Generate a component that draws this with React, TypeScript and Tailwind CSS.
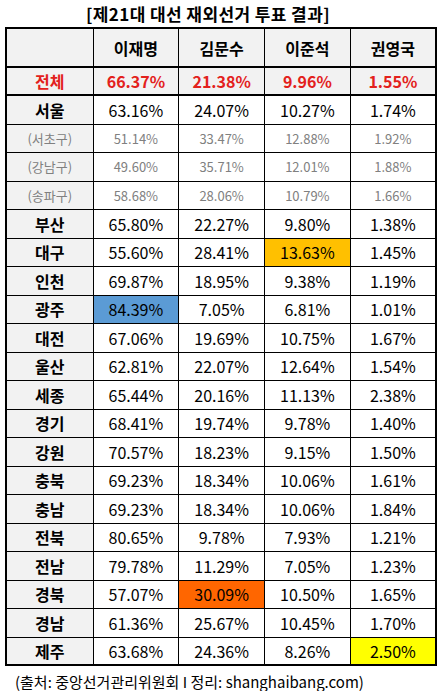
const font = { fontFamily: '"Noto Sans CJK KR", "Noto Sans", sans-serif' };

type Row = {
  name: string;
  values: string[];
  kind?: "total" | "sub";
  hl?: { col: number; bg: string };
};

const candidates = ["이재명", "김문수", "이준석", "권영국"];

const rows: Row[] = [
  { name: "전체", values: ["66.37%", "21.38%", "9.96%", "1.55%"], kind: "total" },
  { name: "서울", values: ["63.16%", "24.07%", "10.27%", "1.74%"] },
  { name: "(서초구)", values: ["51.14%", "33.47%", "12.88%", "1.92%"], kind: "sub" },
  { name: "(강남구)", values: ["49.60%", "35.71%", "12.01%", "1.88%"], kind: "sub" },
  { name: "(송파구)", values: ["58.68%", "28.06%", "10.79%", "1.66%"], kind: "sub" },
  { name: "부산", values: ["65.80%", "22.27%", "9.80%", "1.38%"] },
  { name: "대구", values: ["55.60%", "28.41%", "13.63%", "1.45%"], hl: { col: 2, bg: "bg-[#ffc000]" } },
  { name: "인천", values: ["69.87%", "18.95%", "9.38%", "1.19%"] },
  { name: "광주", values: ["84.39%", "7.05%", "6.81%", "1.01%"], hl: { col: 0, bg: "bg-[#5b9bd5]" } },
  { name: "대전", values: ["67.06%", "19.69%", "10.75%", "1.67%"] },
  { name: "울산", values: ["62.81%", "22.07%", "12.64%", "1.54%"] },
  { name: "세종", values: ["65.44%", "20.16%", "11.13%", "2.38%"] },
  { name: "경기", values: ["68.41%", "19.74%", "9.78%", "1.40%"] },
  { name: "강원", values: ["70.57%", "18.23%", "9.15%", "1.50%"] },
  { name: "충북", values: ["69.23%", "18.34%", "10.06%", "1.61%"] },
  { name: "충남", values: ["69.23%", "18.34%", "10.06%", "1.84%"] },
  { name: "전북", values: ["80.65%", "9.78%", "7.93%", "1.21%"] },
  { name: "전남", values: ["79.78%", "11.29%", "7.05%", "1.23%"] },
  { name: "경북", values: ["57.07%", "30.09%", "10.50%", "1.65%"], hl: { col: 1, bg: "bg-[#ff6600]" } },
  { name: "경남", values: ["61.36%", "25.67%", "10.45%", "1.70%"] },
  { name: "제주", values: ["63.68%", "24.36%", "8.26%", "2.50%"], hl: { col: 3, bg: "bg-[#ffff00]" } },
];

export default function App() {
  return (
    <div className="w-[442px] h-[691px] bg-white text-black leading-none" style={font}>
      {/* Title */}
      <div className="h-[27px] flex items-center justify-center pr-[26px] text-[17px] font-bold tracking-[0.4px]">
        [제21대 대선 재외선거 투표 결과]
      </div>

      {/* Table */}
      <table className="ml-[5px] w-[432px] table-fixed border-collapse border-2 border-black">
        <thead>
          <tr className="h-[39px] bg-[#f2f2f2] border-b-2 border-black">
            <th className="w-[87px] border border-black p-0" />
            {candidates.map((c) => (
              <th key={c} className="border border-black p-0 text-[16px] font-bold">
                {c}
              </th>
            ))}
          </tr>
        </thead>
        <tbody>
          {rows.map((r, idx) => {
            const isTotal = r.kind === "total";
            const isSub = r.kind === "sub";
            return (
              <tr
                key={r.name}
                className={`${idx % 2 === 0 ? "h-[28px]" : "h-[29px]"} ${
                  isTotal ? "bg-[#f2f2f2] border-b-2 border-black" : ""
                }`}
              >
                <td
                  className={`bg-[#f2f2f2] border border-black p-0 text-center ${
                    isTotal
                      ? "text-[16px] font-bold text-[#e3211c]"
                      : isSub
                      ? "text-[13px] text-[#808080]"
                      : "text-[16px] font-bold"
                  }`}
                >
                  {r.name}
                </td>
                {r.values.map((v, i) => (
                  <td
                    key={i}
                    className={`border border-black p-0 text-center ${
                      r.hl && r.hl.col === i ? r.hl.bg : ""
                    } ${
                      isTotal
                        ? "text-[16px] font-bold text-[#e3211c]"
                        : isSub
                        ? "text-[13px] text-[#808080]"
                        : "text-[16px]"
                    }`}
                  >
                    {v}
                  </td>
                ))}
              </tr>
            );
          })}
        </tbody>
      </table>

      {/* Source */}
      <div className="pl-[15px] pt-[8px] text-[15px]">
        (출처: 중앙선거관리위원회 I 정리: shanghaibang.com)
      </div>
    </div>
  );
}
